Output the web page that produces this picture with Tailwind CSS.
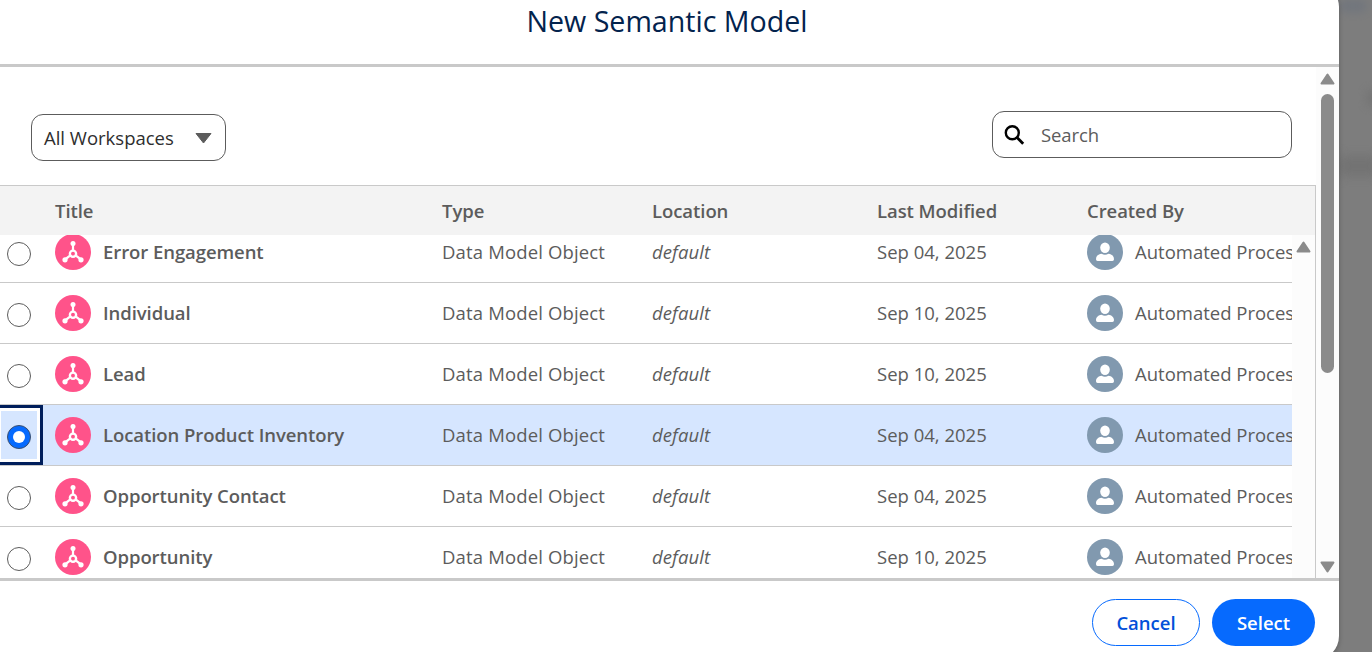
<!DOCTYPE html>
<html lang="en">
<head>
<meta charset="utf-8">
<title>New Semantic Model</title>
<script src="https://cdn.jsdelivr.net/npm/@tailwindcss/browser@4"></script>
</head>
<body class="h-[652px] w-[1372px] overflow-hidden bg-[#7d7d7d] font-['Open_Sans','Noto_Sans',sans-serif] text-[18.5px] text-[#5c5c5c]">
<svg width="0" height="0" class="absolute">
  <symbol id="model" viewBox="-18 -18 36 36">
    <circle r="18" fill="#ff538a"/>
    <g fill="none" stroke="#fff" stroke-width="2.200"><path d="M0-8.500V-1M-3 3.700-8 7.500M3 3.700 8 7.500"/><circle cy="1.700" r="3.100" stroke-width="2.400"/></g>
    <g fill="#fff"><circle cy="-8.600" r="2.500"/><circle cx="-8" cy="7.800" r="2.600"/><circle cx="8" cy="7.800" r="2.600"/></g>
  </symbol>
  <symbol id="user" viewBox="-18 -18 36 36">
    <circle r="18" fill="#8199af"/>
    <ellipse cy="-4.300" rx="4.800" ry="5.200" fill="#fff"/>
    <path d="M-9 7.200C-9 4-6.500 2-3.500 1.700Q0 3.800 3.500 1.700C6.500 2 9 4 9 7.200Q9 8.900 7.400 8.900H-7.400Q-9 8.900-9 7.200Z" fill="#fff"/>
  </symbol>
</svg>
<div class="flex h-full overflow-hidden">
  <div class="z-10 -mt-[17px] flex h-[677px] w-[1339px] shrink-0 flex-col overflow-hidden rounded-r-3xl bg-white pt-[17px] shadow-[0_2px_5px_rgba(0,0,0,0.25)]">
    <header class="flex h-[67px] shrink-0 justify-center border-b-[3px] border-[#c9c9c9] pr-[5px]">
      <h1 class="mt-px text-[28.6px] leading-[40px] whitespace-nowrap text-[#03234d]">New Semantic Model</h1>
    </header>
    <div class="flex h-[511px] shrink-0 overflow-hidden">
      <main class="flex w-[1316px] flex-col">
        <div class="flex h-[118px] shrink-0 justify-between pr-6 pl-[31px]">
          <button class="mt-[47px] flex h-[47px] w-[195px] items-center justify-between rounded-xl border border-[#5c5c5c] pr-[13px] pl-3 text-[#2e2e2e]">
            <span class="whitespace-nowrap">All Workspaces</span>
            <svg class="mt-[2px]" width="17" height="11" viewBox="0 0 17 11"><path d="M1 .5H16L8.500 10Z" fill="#5c5c5c" stroke="#5c5c5c" stroke-linejoin="round"/></svg>
          </button>
          <div class="mt-[44px] flex h-[47px] w-[300px] items-center rounded-xl border border-[#5c5c5c] pl-[11px]">
            <svg width="21" height="20" viewBox="0 0 21 20" fill="none" stroke="#000"><circle cx="8.300" cy="7.800" r="6.500" stroke-width="2.400"/><path d="M12.800 12.300 19.200 18.700" stroke-width="2.800"/></svg>
            <span class="ml-4 tracking-[-0.1px]">Search</span>
          </div>
        </div>
        <section class="flex h-[393px] flex-col border-t border-r border-[#c9c9c9]">
          <div class="grid h-[49px] shrink-0 grid-cols-[387px_210px_225px_210px_1fr] items-center bg-[#f3f3f3] pl-[55px] font-semibold tracking-[-0.06px]">
            <span>Title</span><span>Type</span><span>Location</span><span>Last Modified</span><span>Created By</span>
          </div>
          <div class="flex h-[343px] overflow-hidden">
            <div id="rows" class="-mt-[13px] w-[1292px] shrink-0 overflow-hidden"></div>
            <div class="flex flex-1 justify-center bg-[#fcfcfc] pt-[6px]">
              <svg width="15" height="12" viewBox="0 0 15 12"><path d="M7.500 1.500 13.500 10.500H1.500Z" fill="#8b8b8b" stroke="#8b8b8b" stroke-width="2" stroke-linejoin="round"/></svg>
            </div>
          </div>
        </section>
      </main>
      <div class="flex w-[23px] flex-col items-center bg-[#fcfcfc] pt-[6px] pb-[5px]">
        <svg width="15" height="12" viewBox="0 0 15 12"><path d="M7.500 1.500 13.500 10.500H1.500Z" fill="#8b8b8b" stroke="#8b8b8b" stroke-width="2" stroke-linejoin="round"/></svg>
        <div class="mt-[9px] h-[279px] w-[13px] rounded-full bg-[#8b8b8b]"></div>
        <svg class="mt-auto" width="15" height="12" viewBox="0 0 15 12"><path d="M7.500 10.500 13.500 1.500H1.500Z" fill="#8b8b8b" stroke="#8b8b8b" stroke-width="2" stroke-linejoin="round"/></svg>
      </div>
    </div>
    <footer class="flex h-[82px] shrink-0 justify-end gap-3 border-t-[3px] border-[#c9c9c9] pt-[18px] pr-6 font-semibold">
      <button class="h-[47px] w-[108px] rounded-full border border-[#066afe] text-[#0250d9]">Cancel</button>
      <button class="h-[47px] w-[103px] rounded-full bg-[#066afe] text-white">Select</button>
    </footer>
  </div>
  <div class="flex flex-1 flex-col items-end">
    <div class="mr-3 h-3 w-7 rounded-full bg-[#68707d] opacity-60 blur-[5px]"></div>
    <div class="mt-[78px] h-4 w-3 bg-[#707070] opacity-70 blur-[5px]"></div>
    <div class="mt-[50px] h-5 w-full bg-[#707070] opacity-80 blur-[6px]"></div>
  </div>
</div>
<script>
const data = [
  ['Error Engagement', 'Sep 04, 2025'],
  ['Individual', 'Sep 10, 2025'],
  ['Lead', 'Sep 10, 2025'],
  ['Location Product Inventory', 'Sep 04, 2025', true],
  ['Opportunity Contact', 'Sep 04, 2025'],
  ['Opportunity', 'Sep 10, 2025'],
];
document.getElementById('rows').innerHTML = data.map(([title, date, on]) => `
  <div class="grid h-[61px] grid-cols-[55px_387px_210px_225px_210px_1fr] items-center border-b border-[#c9c9c9] whitespace-nowrap ${on ? 'bg-[#d6e6ff]' : 'bg-white'}">
    ${on
      ? '<div class="h-[60px] w-[43px] border-y-[3px] border-r-[3px] border-[#001e5b]"><div class="h-[54px] border-[3px] border-l border-white pt-[14px] pl-[6px]"><div class="flex size-6 items-center justify-center rounded-full border border-[#3c4f6d] bg-[#066afe]"><div class="size-3 rounded-full bg-white"></div></div></div></div>'
      : '<div class="mt-1 ml-[7px] size-6 rounded-full border border-[#5c5c5c] bg-white"></div>'}
    <div class="flex items-center gap-3 font-semibold tracking-[-0.07px]"><svg class="size-9"><use href="#model"/></svg><span>${title}</span></div>
    <div class="tracking-[0.15px]">Data Model Object</div>
    <div class="tracking-[0.1px] italic">default</div>
    <div>${date}</div>
    <div class="flex items-center gap-3 overflow-hidden"><svg class="size-9 shrink-0"><use href="#user"/></svg><span>Automated Process</span></div>
  </div>`).join('');
</script>
</body>
</html>
